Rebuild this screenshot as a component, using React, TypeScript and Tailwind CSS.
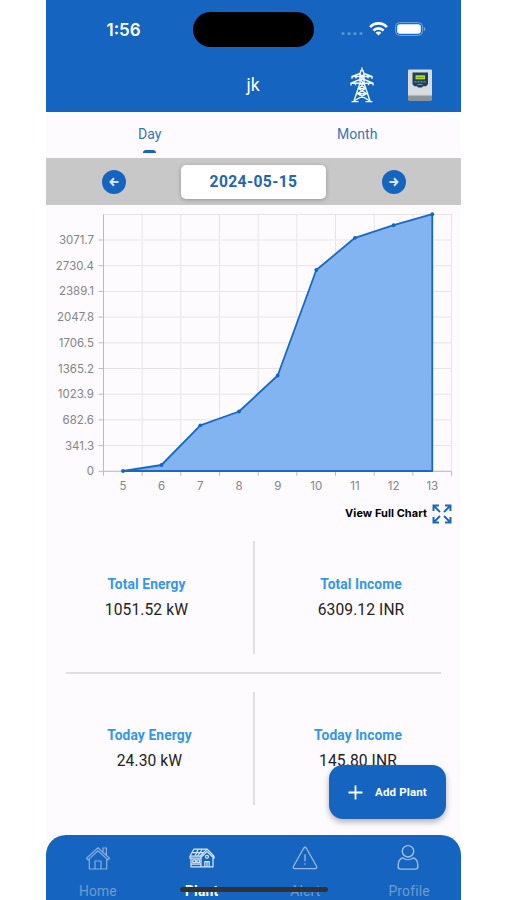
import type { ReactNode } from "react";

const points = [
  { hour: 5, x: 77, y: 266 },
  { hour: 6, x: 115.5, y: 260 },
  { hour: 7, x: 154.3, y: 220.3 },
  { hour: 8, x: 193, y: 206.5 },
  { hour: 9, x: 231.7, y: 170.5 },
  { hour: 10, x: 270.3, y: 65 },
  { hour: 11, x: 309, y: 32.8 },
  { hour: 12, x: 347.6, y: 20.2 },
  { hour: 13, x: 386.3, y: 9.2 },
];

const yLabels = ["0", "341.3", "682.6", "1023.9", "1365.2", "1706.5", "2047.8", "2389.1", "2730.4", "3071.7"];
const columns = [0, 1, 2, 3, 4, 5, 6, 7, 8, 9];

const LEFT = 57.5;
const RIGHT = 405.5;
const TOP = 9.5;
const BOTTOM = 266.3;
const COL = 38.67;
const ROW = 25.7;

const StatusBar = () => (
  <div className="grid h-[59px] grid-cols-[147px_121px_147px] pt-3 text-white">
    <span className="pl-[60.5px] pt-[6px] font-['Inter'] text-[17px] font-semibold leading-6">1:56</span>
    <div className="h-[35px] rounded-full bg-black" />
    <div className="flex h-[35px] items-center pl-[27px]">
      <svg width="22" height="6" viewBox="0 0 22 6" fill="#5b95d6" className="mt-[8px]">
        <circle cx="2" cy="2.5" r="1.6" />
        <circle cx="8" cy="2.5" r="1.6" />
        <circle cx="14" cy="2.5" r="1.6" />
        <circle cx="20" cy="2.5" r="1.6" />
      </svg>
      <svg width="19" height="14" viewBox="0 0 19 14" fill="none" stroke="#fff" strokeWidth="2.7" className="-mt-[2px] ml-[6px]">
        <path d="M1.1 5.1C5.8 .2 13.2 .2 17.9 5.1" />
        <path d="M4.4 8.6C7.2 5.7 11.8 5.7 14.6 8.6" />
        <path d="M9.5 13.6 6.6 10.7C8.2 9.2 10.8 9.2 12.4 10.7Z" fill="#fff" stroke="none" />
      </svg>
      <svg width="31" height="14" viewBox="0 0 31 14" className="-mt-[2px] ml-[7px]">
        <rect x=".6" y=".6" width="26.8" height="12.8" rx="4" fill="none" stroke="#73a5dc" />
        <rect x="2.2" y="2.2" width="23.6" height="9.6" rx="2.8" fill="#fff" />
        <path d="M28.8 4.8c2 .8 2 3.6 0 4.4z" fill="#73a5dc" />
      </svg>
    </div>
  </div>
);

const TowerIcon = () => (
  <svg width="24" height="36" viewBox="0 0 24 36" fill="none" stroke="#f2f8ff" strokeWidth="1.4" strokeLinejoin="round">
    <path d="M12 .5v3M10 7l1-3.5h2L14 7M10 7v9L4 34M14 7v9l6 18" />
    <path d="M10 6.5 2 9.5h20l-8-3M10 12.5l-9 3.7h22l-9-3.7M2 9.5v2.2M6 9.5v2M18 9.5v2M22 9.5v2.2M1 16.2v2.4M5.5 16.2v2M18.5 16.2v2M23 16.2v2.4" />
    <path d="m10 7 4 5.5M14 7l-4 5.5 4 4-5.5 5 8 5.2L4 34M10 12.5h4M10 16.5l5.5 5-8 5.2L20 34M8.5 21.5h7M7 26.7h10M1.5 34.6h7M15.5 34.6h7" />
  </svg>
);

const InverterIcon = () => (
  <svg width="26" height="33" viewBox="0 0 26 33">
    <rect x="1" y=".5" width="24" height="27" rx="1" fill="#d7dce0" />
    <path d="M1 26.5h24v4q0 1.5-1.5 1.5h-21Q1 32 1 30.5z" fill="#8a949b" />
    <path d="M5.5 3.5H21v11.7l-2 2h-3l-1 1.2h-4l-1-1.2H7.5l-2-2z" fill="#21415a" />
    <rect x="8.5" y="6.3" width="9.5" height="4" fill="#b9df25" />
    <path d="M9.5 8.5H17" stroke="#6d9718" strokeWidth=".8" />
    <path d="M7.5 12.8h11" stroke="#438bc4" strokeWidth="1.4" strokeDasharray="2 1" />
    <path d="M10.5 15.5h5" stroke="#8194a0" />
  </svg>
);

const ArrowButton = ({ flip }: { flip?: boolean }) => (
  <div className="flex size-6 items-center justify-center rounded-full bg-[#1565c0]">
    <svg width="10" height="10" viewBox="0 0 10 10" fill="none" stroke="#dbe3ec" strokeWidth="2" className={flip ? "rotate-180" : ""}>
      <path d="M5 1.2 1.5 5 5 8.8M1.5 5h8" />
    </svg>
  </div>
);

const AreaChart = () => {
  const line = points.map((p) => `${p.x},${p.y}`).join(" ");
  return (
    <svg width="415" height="295" viewBox="0 0 415 295" className="font-['Inter'] text-[11.5px]">
      <g stroke="#e7e4e8">
        {columns.map((i) => (
          <line key={i} x1={LEFT + i * COL} x2={LEFT + i * COL} y1={TOP} y2={BOTTOM} />
        ))}
        {columns.map((i) => (
          <line key={i} x1={LEFT} x2={RIGHT} y1={BOTTOM - i * ROW} y2={BOTTOM - i * ROW} />
        ))}
        <line x1={LEFT} x2={RIGHT} y1={TOP} y2={TOP} />
      </g>
      <g stroke="#bdbbbf">
        <path d={`M${LEFT} ${TOP}V${BOTTOM}H${RIGHT}`} fill="none" />
        {columns.map((i) => (
          <line key={i} x1={LEFT + i * COL} x2={LEFT + i * COL} y1={BOTTOM} y2={BOTTOM + 4.5} />
        ))}
        {columns.map((i) => (
          <line key={i} x1={LEFT - 5} x2={LEFT} y1={BOTTOM - i * ROW} y2={BOTTOM - i * ROW} />
        ))}
      </g>
      <polygon points={`${line} 386.3,266`} fill="#82b4f1" stroke="#1a69be" strokeWidth="1.8" strokeLinejoin="round" />
      {points.map((p) => (
        <circle key={p.hour} cx={p.x} cy={p.y} r="1.9" fill="#1565c0" />
      ))}
      <g fill="#858387">
        {yLabels.map((label, i) => (
          <text key={label} x="48" y={BOTTOM - i * ROW + 4} textAnchor="end">
            {label}
          </text>
        ))}
        {points.map((p) => (
          <text key={p.hour} x={p.x} y="285" textAnchor="middle">
            {p.hour}
          </text>
        ))}
      </g>
    </svg>
  );
};

interface StatProps {
  title: string;
  value: string;
  className: string;
}

const Stat = ({ title, value, className }: StatProps) => (
  <div className={`flex flex-col items-center pt-[33px] ${className}`}>
    <h3 className="text-[13.8px] font-bold leading-5 tracking-[0.1px] text-[#3397eb]">{title}</h3>
    <p className="mt-[6px] text-[15.6px] leading-5 tracking-[0.1px] text-[#222]">{value}</p>
  </div>
);

const Divider = () => <div className="w-[2px] shrink-0 bg-[#e2dfe3]" />;

const HomeIcon = () => (
  <svg width="26" height="26" viewBox="0 0 26 26" fill="none" stroke="#86aedb" strokeWidth="1.2" strokeLinejoin="round">
    <path d="M1.5 13.3 13 2.7l11.5 10.6-1.6 1.6L13 5.8l-9.9 9.1zM4.3 14v10h17.4V14M10 24v-8h6v8M18 7.2V3h3.4v7.3M17.3 3h4.8" />
  </svg>
);

const PlantIcon = () => (
  <svg width="26" height="20" viewBox="0 0 26 20" fill="none" stroke="#d4e5f8" strokeWidth="1.25" strokeLinejoin="round">
    <path d="M5 1h13l7 7.2v2l-7-6.6-7 6.6H1V8.2L5 1zM18 1l-7 7.2H1.5M9.2 1 6 8.2M13.5 1l-5 7.2M3.3 4.7h11M2 10.2v8.6h22v-8.7M12 10v8.8M2 16h10" />
    <path d="M3.8 11.8h2.8v2.8H3.8zM8 11.8h2.6v2.8H8zM15.8 18.8v-5.3h4.4v5.3M18 13.5v5.3" />
    <circle cx="18" cy="8.8" r="1.5" />
  </svg>
);

const AlertIcon = () => (
  <svg width="26" height="26" viewBox="0 0 26 26" fill="none" stroke="#9ab9de" strokeWidth="1.3" strokeLinejoin="round">
    <path d="M11.6 3.3q1.4-2.1 2.8 0l10.1 17.9q.9 2.2-1.4 2.4H2.9q-2.3-.2-1.4-2.4z" />
    <path d="M13 9.2v7M13 18.2v1.5" />
  </svg>
);

const ProfileIcon = () => (
  <svg width="26" height="28" viewBox="0 0 26 28" fill="none" stroke="#a4c0e2" strokeWidth="1.35" className="mr-[3px]">
    <circle cx="13" cy="7.3" r="5.7" />
    <path d="M7.4 13.8C4.7 15 3.2 17.5 3.2 21v1.8q0 2.3 2.3 2.3h15q2.3 0 2.3-2.3V21c0-3.5-1.5-6-4.2-7.2-3.3 2.5-7.9 2.5-11.2 0z" />
  </svg>
);

const NavItem = ({ label, active, children }: { label: string; active?: boolean; children: ReactNode }) => (
  <div className="flex flex-col items-center">
    <div className="flex h-[46px] items-center justify-center">{children}</div>
    <span
      className={`text-[13.8px] leading-5 tracking-[0.2px] ${active ? "font-bold text-white" : "text-[#6e9cd0]"}`}
    >
      {label}
    </span>
  </div>
);

export default function App() {
  return (
    <div className="h-[900px] w-[507px] overflow-hidden bg-white pl-[46px] font-['Roboto',sans-serif]">
      <div className="relative flex h-[900px] w-[415px] flex-col overflow-hidden bg-[#fefbff]">
        <header className="h-[112px] shrink-0 bg-[#1565c0]">
          <StatusBar />
          <div className="grid h-[52px] grid-cols-[166px_82px_167px] items-center text-white">
            <h1 className="col-start-2 pt-px text-center text-[17.5px]">jk</h1>
            <div className="flex items-center pl-[56px]">
              <TowerIcon />
              <div className="ml-[33px]">
                <InverterIcon />
              </div>
            </div>
          </div>
        </header>

        <div className="grid h-[46px] shrink-0 grid-cols-2 text-center text-[14px] tracking-[0.1px] text-[#3674bd]">
          <div className="flex flex-col items-center pt-[12px]">
            <span className="leading-5">Day</span>
            <span className="mt-[6px] h-[3px] w-[13px] rounded-t-[3px] bg-[#1565c0]" />
          </div>
          <div className="pt-[12px] leading-5">Month</div>
        </div>

        <div className="flex h-[47px] shrink-0 items-center justify-between bg-[#c8c8c9] pl-[56px] pr-[55px]">
          <ArrowButton />
          <div className="mr-px flex h-[34px] w-[145px] items-center justify-center rounded-[5px] bg-white pt-[2px] text-[15.6px] font-bold tracking-[0.4px] text-[#1e65b5] shadow-[0_1px_4px_rgba(0,0,0,0.25)]">
            2024-05-15
          </div>
          <ArrowButton flip />
        </div>

        <div className="h-[295px] shrink-0">
          <AreaChart />
        </div>

        <div className="flex h-[26px] shrink-0 items-center justify-end pr-[9px]">
          <span className="font-['Inter'] text-[11px] font-bold tracking-[0.05px] text-black">View Full Chart</span>
          <svg width="20" height="20" viewBox="0 0 20 20" fill="none" stroke="#1b69bf" strokeWidth="2" className="ml-[5px] mt-[2px]">
            <path d="M1.5 7V1.5H7M2 2l6 6M13 1.5h5.5V7M18 2l-6 6M1.5 13v5.5H7M2 18l6-6M13 18.5h5.5V13M18 18l-6-6" />
          </svg>
        </div>

        <section className="mt-[15px] flex h-[113px] shrink-0">
          <Stat title="Total Energy" value="1051.52 kW" className="w-[207px] pr-[6px]" />
          <Divider />
          <Stat title="Total Income" value="6309.12 INR" className="w-[206px] pl-[6px]" />
        </section>
        <div className="mx-5 mt-[18px] h-[2px] shrink-0 bg-[#e2dee3]" />
        <section className="mt-[18px] flex h-[113px] shrink-0">
          <Stat title="Today Energy" value="24.30 kW" className="w-[207px]" />
          <Divider />
          <Stat title="Today Income" value="145.80 INR" className="w-[206px]" />
        </section>

        <button className="absolute left-[283px] top-[765px] flex h-[54px] w-[117px] items-center rounded-[14px] bg-[#1565c0] pl-[19px] text-white shadow-[0_3px_6px_rgba(0,0,0,0.3)]">
          <svg width="15" height="15" viewBox="0 0 15 15" stroke="#fff" strokeWidth="1.8">
            <path d="M7.5 .5v14M.5 7.5h14" />
          </svg>
          <span className="ml-[12px] pt-px text-[11.5px] font-bold tracking-[0.15px]">Add Plant</span>
        </button>

        <nav className="mt-auto grid h-[65px] shrink-0 grid-cols-4 rounded-t-[20px] bg-[#1565c0]">
          <NavItem label="Home">
            <HomeIcon />
          </NavItem>
          <NavItem label="Plant" active>
            <PlantIcon />
          </NavItem>
          <NavItem label="Alert">
            <AlertIcon />
          </NavItem>
          <NavItem label="Profile">
            <ProfileIcon />
          </NavItem>
        </nav>
        <div className="absolute left-[134px] top-[887px] h-[5px] w-[148px] rounded-full bg-[#303236]" />
      </div>
    </div>
  );
}
